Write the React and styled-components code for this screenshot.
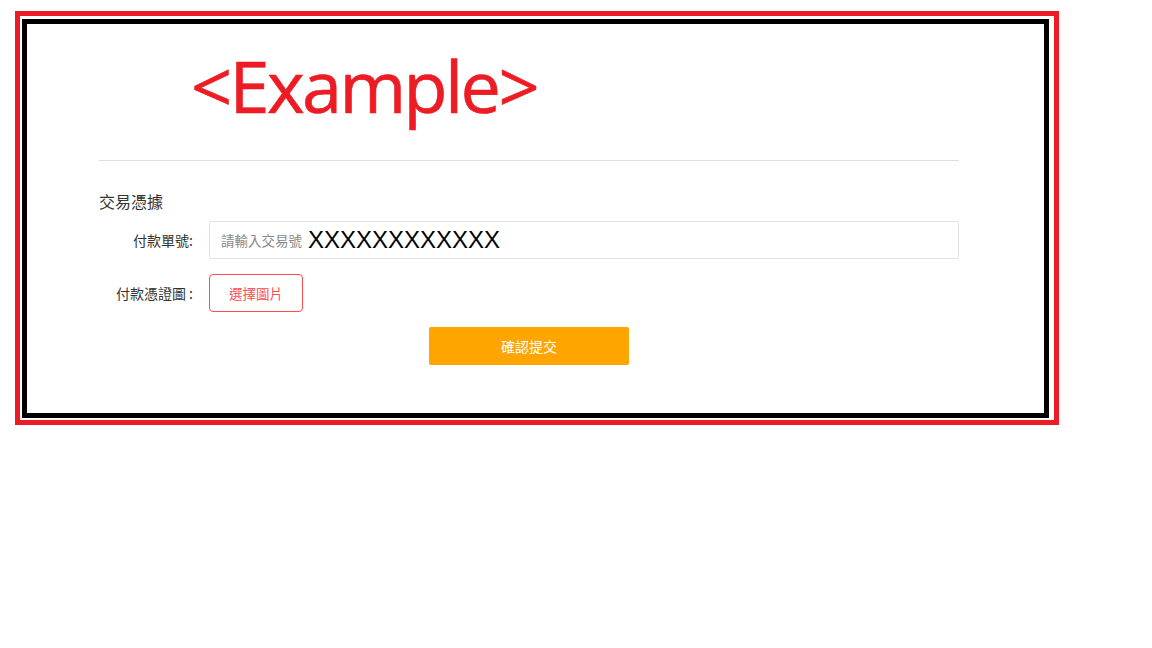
import React from 'react';
import styled, { createGlobalStyle } from 'styled-components';

const GlobalStyle = createGlobalStyle`
  html, body {
    margin: 0;
    padding: 0;
    background: #fff;
  }
  body {
    font-family: "Noto Sans CJK TC", "Noto Sans", sans-serif;
  }
`;

function App() {
  return (
    <Page>
      <GlobalStyle />
      <RedFrame>
        <BlackFrame>
          <Title>&lt;Example&gt;</Title>
          <Divider />
          <Form>
            <SectionTitle>交易憑據</SectionTitle>
            <Row first>
              <Label>付款單號:</Label>
              <FakeInput>
                <Placeholder>請輸入交易號</Placeholder>
                <Mask>XXXXXXXXXXXX</Mask>
              </FakeInput>
            </Row>
            <Row>
              <Label>付款憑證圖 :</Label>
              <PickButton>選擇圖片</PickButton>
            </Row>
            <Actions>
              <SubmitButton>確認提交</SubmitButton>
            </Actions>
          </Form>
        </BlackFrame>
      </RedFrame>
    </Page>
  );
}

const Page = styled.div`
  padding: 11px 0 0 15px;
`;

const RedFrame = styled.div`
  display: inline-block;
  border: 5px solid #ed1c24;
  padding: 3px 5px 2px 2px;
`;

const BlackFrame = styled.div`
  border: 5px solid #000;
  padding: 25px 0 48px 72px;
  width: 945px;
`;

const Title = styled.h1`
  margin: 0 0 0 92px;
  font-family: "Open Sans", "Noto Sans", sans-serif;
  font-weight: 400;
  font-size: 72px;
  line-height: 72px;
  letter-spacing: -2.6px;
  color: #ed1c24;
  -webkit-text-stroke: 0.6px #ed1c24;
`;

const Divider = styled.hr`
  width: 860px;
  margin: 39px 0 0;
  border: 0;
  border-top: 1px solid #ddd;
`;

const Form = styled.div`
  width: 860px;
  display: flex;
  flex-direction: column;
`;

const SectionTitle = styled.div`
  margin-top: 28px;
  font-size: 16px;
  line-height: 24px;
  color: #333;
`;

const Row = styled.div`
  display: flex;
  align-items: center;
  margin-top: ${props => (props.first ? '8px' : '15px')};
`;

const Label = styled.div`
  width: 110px;
  flex-shrink: 0;
  padding-right: 16px;
  box-sizing: border-box;
  text-align: right;
  font-size: 14px;
  color: #333;
`;

const FakeInput = styled.div`
  flex: 1;
  height: 38px;
  box-sizing: border-box;
  border: 1px solid #e2e2e2;
  border-radius: 2px;
  padding: 0 11px;
  display: flex;
  align-items: center;
  gap: 6px;
`;

const Placeholder = styled.span`
  font-size: 13.5px;
  color: #888;
`;

const Mask = styled.span`
  font-family: "Liberation Sans", Arial, sans-serif;
  font-size: 24px;
  color: #000;
`;

const PickButton = styled.button`
  width: 94px;
  height: 38px;
  box-sizing: border-box;
  border: 1px solid #ff4d4d;
  border-radius: 4px;
  background: #fff;
  color: #ff4d4d;
  font-family: inherit;
  font-size: 13.5px;
  cursor: pointer;
`;

const Actions = styled.div`
  display: flex;
  justify-content: center;
  margin-top: 15px;
`;

const SubmitButton = styled.button`
  width: 200px;
  height: 38px;
  border: 0;
  border-radius: 2px;
  background: #ffa500;
  color: #fff;
  font-family: inherit;
  font-size: 14px;
  cursor: pointer;
`;

export default App;
